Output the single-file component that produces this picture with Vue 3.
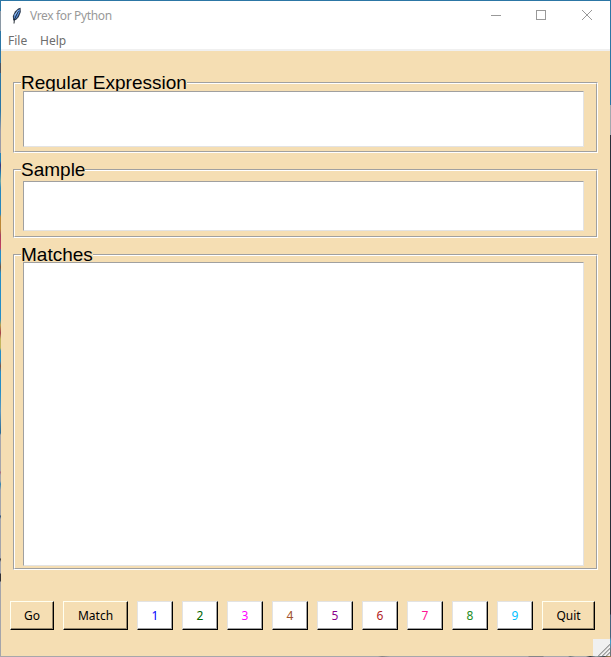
<script setup>
const groups = [
  { title: 'Regular Expression', name: 'regex' },
  { title: 'Sample', name: 'sample' },
  { title: 'Matches', name: 'matches' }
]
const digits = [1, 2, 3, 4, 5, 6, 7, 8, 9]
</script>

<template>
  <div class="window">
    <div class="edge left"></div>
    <div class="main">
      <header class="titlebar">
        <svg class="feather" width="12" height="18" viewBox="0 0 12 18">
          <path d="M2.2 13.5L1.8 9L4 4.5L7.2 1.5L9.6 0.8L9.8 5L7.8 10L5 13Z" fill="#2b3a50" />
          <path d="M2.8 11.5L3.6 7.5L6.6 3.5L8.8 2L8.4 5.5L6.2 10L4 12.2Z" fill="#5f9bee" />
          <path d="M3 16.5L3.4 12.5L7.4 4" fill="none" stroke="#111820" stroke-width="0.9" />
          <path d="M3.5 8.5L7 3.5" stroke="#b5d4fa" stroke-width="0.8" />
        </svg>
        <span class="title">Vrex for Python</span>
        <svg class="controls" width="104" height="12" viewBox="0 0 104 12" fill="none" stroke="#999">
          <path d="M0 6.5H10" />
          <rect x="45.5" y="1.5" width="9" height="9" />
          <path d="M91 1L101 11M101 1L91 11" />
        </svg>
      </header>
      <nav class="menu"><span class="file">File</span><span class="help">Help</span></nav>
      <main class="content">
        <section v-for="g in groups" :key="g.name" class="group" :class="g.name">
          <div class="frame">
            <span class="label">{{ g.title }}</span>
            <div class="field"></div>
          </div>
        </section>
        <div class="buttons">
          <button class="btn go">Go</button>
          <button class="btn match">Match</button>
          <button v-for="n in digits" :key="n" class="btn digit" :class="'c' + n">{{ n }}</button>
          <button class="btn quit">Quit</button>
        </div>
      </main>
      <svg class="grip" width="17" height="17" viewBox="0 0 17 17">
        <rect width="17" height="17" fill="#f0f0f0" />
        <path d="M5 17L17 5M9 17L17 9M13 17L17 13" stroke="#a0a0a0" stroke-width="1.6" />
        <path d="M4 17L17 4M8 17L17 8M12 17L17 12" stroke="#fff" stroke-width="0.7" />
      </svg>
    </div>
    <div class="edge right"></div>
    <div class="edge bottom"></div>
  </div>
</template>

<style>
body { margin: 0; overflow: hidden; }
</style>

<style scoped>
.window {
  box-sizing: border-box;
  width: 611px;
  height: 657px;
  display: grid;
  grid-template: 655px 1px / 1px 609px 1px;
  border-top: 1px solid #2c76a5;
  font-family: "Noto Sans", "Open Sans", sans-serif;
  font-size: 12px;
}
.left {
  background: linear-gradient(#2c76a5 0 10px, #8a98a5 10px 30px, #2c76a5 30px 62px, #4b5360 62px 72px, #2c76a5 72px 110px, #9b9ba5 130px 152px, #2584b8 152px 160px, #39317a 164px, #2380b0 172px, #79aaa5 180px, #2887bc 187px 213px, #bb8736 216px 228px, #a8415c 234px, #c33c60 247px, #268dc5 250px 260px, #74543d 266px, #268dc5 272px 318px, #b6a34e 324px, #a73d4a 332px, #c3b45c 338px 347px, #268dc5 350px 360px, #805543 365px, #268dc5 371px 390px, #6199bd 410px, #286a94 432px, #a5a5aa 434px 470px, #a7667b 471px, #a5a5aa 474px 480px, #3385b0 483px, #a5a5aa 489px 514px, #244d78 515px, #a5a5aa 518px 557px, #303036 558px, #a5a5aa 561px 572px, #303036 573px 580px, #a5a5aa 581px);
}
.right { background: linear-gradient(#2c76a5 0 104px, #a2a6ac 104px 134px, #292d38 134px 613px, #46627c 614px 636px, #44a0d0 640px, #6b747b 650px); }
.bottom {
  grid-column: 1 / 4;
  background: linear-gradient(90deg, #a7a7ab 0 378px, #828286 382px, #a7a7ab 390px 528px, #858589 529px 543px, #a7a7ab 544px 568px, #67777d 570px, #aaa 575px 586px, #323a44 590px, #99a3a8 596px, #39454d 604px, #94794e 608px);
}
.main {
  position: relative;
  display: flex;
  flex-direction: column;
  background: #f5deb3;
}
.titlebar {
  height: 29px;
  display: flex;
  align-items: center;
  background: #fff;
  color: #999;
}
.feather { margin-left: 10px; }
.title { margin-left: 7px; letter-spacing: -0.35px; white-space: nowrap; }
.controls { margin: 0 15px 1px auto; }
.menu {
  box-sizing: border-box;
  height: 21px;
  display: flex;
  align-items: center;
  padding: 2px 0 0 7px;
  background: #fff;
  border-bottom: 2px solid #f0f0f0;
  color: #6d6d6d;
}
.file { width: 32px; }
.content {
  display: flex;
  flex-direction: column;
  gap: 16px;
  padding: 31px 13px 0 12px;
}
.group {
  box-sizing: border-box;
  width: 585px;
  border: 1px solid;
  border-color: #a0a0a0 #fff #fff #a0a0a0;
}
.frame {
  box-sizing: border-box;
  height: 100%;
  display: grid;
  border: 1px solid;
  border-color: #fff #a0a0a0 #a0a0a0 #fff;
}
.regex { height: 71px; }
.sample { height: 69px; }
.matches { height: 316px; }
.label {
  grid-area: 1 / 1;
  justify-self: start;
  align-self: start;
  height: 21px;
  margin: -12px 0 0 6px;
  background: #f5deb3;
  color: #000;
  font: 19px/21px "Liberation Sans", Arial, sans-serif;
  white-space: nowrap;
}
.field {
  grid-area: 1 / 1;
  align-self: start;
  box-sizing: border-box;
  width: 561px;
  margin: 7px 0 0 8px;
  background: #fff;
  border: 1px solid;
  border-color: #a0a0a0 #e3e3e3 #e3e3e3 #a0a0a0;
}
.regex .field { height: 56px; }
.sample .field { height: 50px; margin-top: 10px; }
.matches .field { height: 304px; margin-top: 6px; }
.buttons { display: flex; gap: 9px; margin: 15px 0 0 -3px; }
.btn {
  box-sizing: border-box;
  flex: none;
  height: 29px;
  padding: 0;
  border: 1px solid;
  border-color: #fffff0 #000 #000 #fffff0;
  border-radius: 0;
  box-shadow: inset -1px -1px #93856b;
  background: #f5deb3;
  color: #000;
  font: 12px/27px "Noto Sans", "Open Sans", sans-serif;
}
.go { width: 44px; }
.match { width: 65px; }
.quit { width: 53px; }
.digit {
  width: 36px;
  background: #fff;
  border-color: #e3e3e3 #000 #000 #e3e3e3;
  box-shadow: inset -1px -1px #a0a0a0;
}
.c1 { color: #00f; }
.c2 { color: #006400; }
.c3 { color: #f0f; }
.c4 { color: #a0522d; }
.c5 { color: #8b008b; }
.c6 { color: #b22222; }
.c7 { color: #ff1493; }
.c8 { color: #228b22; }
.c9 { color: #00bfff; }
.grip { position: absolute; right: 0; bottom: 0; }
</style>
